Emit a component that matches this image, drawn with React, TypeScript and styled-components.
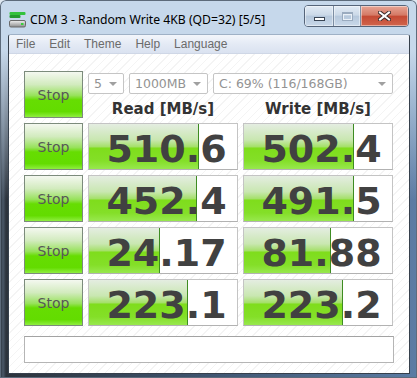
import React from 'react'
import styled, { createGlobalStyle } from 'styled-components'

const GlobalStyle = createGlobalStyle`
  html, body { margin: 0; padding: 0; }
  body {
    background: #dfe8f1;
    font-family: 'Noto Sans', 'DejaVu Sans', sans-serif;
  }
`

const Window = styled.div`
  width: 417px;
  height: 378px;
  box-sizing: border-box;
  display: flex;
  flex-direction: column;
  padding: 0 7px 4px 8px;
  border-radius: 6px 6px 0 0;
  background:
    linear-gradient(to bottom, #c6d8eb 0, #c6d8eb 50px, rgba(198, 216, 235, 0.6) 110px, rgba(198, 216, 235, 0) 200px),
    linear-gradient(to right, #262d36 0, #4a5868 3px, #2c333c 6px, #3f5570 50%, #5b7ca4 100%);
  box-shadow: inset 0 0 0 1px #5d6b7b;
`

const TitleBar = styled.div`
  height: 34px;
  display: flex;
  align-items: flex-start;
  flex-shrink: 0;
`

const AppIcon = styled.svg`
  margin: 11px 0 0 1px;
  flex-shrink: 0;
`

const Title = styled.div`
  margin: 12px 0 0 4px;
  font-size: 12.2px;
  line-height: 16px;
  color: #000;
  white-space: nowrap;
`

const CaptionGroup = styled.div`
  margin: 5px 1px 0 auto;
  display: flex;
  height: 20px;
  border: 1px solid #56657a;
  border-radius: 4px;
  overflow: hidden;
`

const CaptionButton = styled.div<{ $w: number; $close?: boolean }>`
  width: ${({ $w }) => $w}px;
  display: flex;
  align-items: center;
  justify-content: center;
  box-shadow: inset 0 0 0 1px rgba(255, 255, 255, 0.45);
  background: ${({ $close }) =>
    $close
      ? 'linear-gradient(to bottom, #e7a595 0%, #d57a66 45%, #c54a34 52%, #d1654c 100%)'
      : 'linear-gradient(to bottom, #e2ebf5 0%, #cbd9e8 45%, #b6c8dc 52%, #c9d8e9 100%)'};
  & + & {
    border-left: 1px solid #7d8ea3;
  }
`

const MinGlyph = styled.div`
  width: 9px;
  height: 2px;
  margin-top: 6px;
  background: #fff;
  border: 1px solid #3b4655;
`

const MaxGlyph = styled.div`
  width: 9px;
  height: 6px;
  border: 1px solid #9aabbf;
  border-top-width: 2px;
  box-shadow: inset 0 0 0 1px #e9f0f7;
`

const Client = styled.div`
  flex: 1;
  display: flex;
  flex-direction: column;
  border: 1px solid #36404c;
  border-top-color: #9fb1c6;
  border-radius: 3px 3px 0 0;
  background: #fff;
  overflow: hidden;
`

const MenuBar = styled.div`
  height: 19px;
  box-sizing: border-box;
  display: flex;
  align-items: center;
  background: linear-gradient(to bottom, #f3f6fb 0%, #e4eaf5 50%, #dae2f0 100%);
  border-bottom: 1px solid #cfd7e6;
`

const MenuItem = styled.span`
  padding: 0 7px;
  font-family: 'Liberation Sans', Arial, sans-serif;
  font-size: 12px;
  color: #6b6b6b;
`

const Content = styled.div`
  flex: 1;
  padding: 17px 15px 10px 15px;
  background: repeating-linear-gradient(135deg, #ffffff 0 5px, #f4f4f4 5px 6px);
`

const Grid = styled.div`
  display: grid;
  grid-template-columns: 59px 150px 150px;
  grid-auto-rows: 47px;
  gap: 5px;
`

const Controls = styled.div`
  grid-column: 2 / 4;
  display: flex;
  flex-direction: column;
`

const ComboRow = styled.div`
  display: flex;
  gap: 5px;
  margin-top: 2px;
  height: 22px;
`

const Combo = styled.div<{ $w: number }>`
  width: ${({ $w }) => $w}px;
  box-sizing: border-box;
  display: flex;
  align-items: center;
  justify-content: space-between;
  padding: 0 6px 0 5px;
  border: 1px solid #c5c5c5;
  border-radius: 2px;
  background: #fff;
  font-family: 'DejaVu Sans', sans-serif;
  font-size: 12.5px;
  color: #939393;
`

const Arrow = styled.span`
  width: 0;
  height: 0;
  border-left: 4px solid transparent;
  border-right: 4px solid transparent;
  border-top: 4px solid #a0a0a0;
`

const Headers = styled.div`
  display: grid;
  grid-template-columns: 150px 150px;
  column-gap: 5px;
  padding-top: 6px;
  line-height: 18px;
  font-family: 'DejaVu Sans', sans-serif;
  font-weight: bold;
  font-size: 15px;
  color: #333;
  text-align: center;
`

const StopButton = styled.button`
  padding: 0;
  border: 1px solid #7c8b7c;
  background: linear-gradient(to bottom, #f4f8f0 0%, #d2ebbe 28%, #98e25c 52%, #66dd02 62%, #63dc00 88%, #8fee40 100%);
  font-family: 'DejaVu Sans', sans-serif;
  font-size: 14px;
  color: #575757;
  cursor: default;
`

const ResultCell = styled.div<{ $pct: number }>`
  box-sizing: border-box;
  border: 1px solid #c4c4c4;
  border-bottom-color: #b2b2b2;
  padding: 5px 0 0 7px;
  text-align: center;
  font-family: 'DejaVu Sans', sans-serif;
  font-weight: bold;
  font-size: 38px;
  line-height: 40px;
  color: #414141;
  background-color: #fff;
  background-image:
    linear-gradient(#3e8c22, #3e8c22),
    linear-gradient(to bottom, #e4ede1 0%, #c9e7b1 35%, #a6e06c 50%, #7fdd1c 54%, #84df28 82%, #98e84e 100%);
  background-size: 1px 100%, ${({ $pct }) => $pct}% 100%;
  background-position: ${({ $pct }) => $pct}% 0, 0 0;
  background-repeat: no-repeat;
`

const Comment = styled.div`
  margin-top: 10px;
  width: 370px;
  height: 27px;
  box-sizing: border-box;
  border: 1px solid #b5b5b5;
  border-top-color: #a3a3a3;
  background: #fff;
`

const results = [
  ['510.6', '502.4'],
  ['452.4', '491.5'],
  ['24.17', '81.88'],
  ['223.1', '223.2'],
]

// CrystalDiskMark draws the bar on a log scale
const barPct = (v: string) => Math.max(0, Math.min(100, (Math.log10(parseFloat(v) * 10) / 5) * 100))

export default function App() {
  return (
    <>
      <GlobalStyle />
      <Window>
        <TitleBar>
          <AppIcon width="17" height="17" viewBox="0 0 17 17">
            <defs>
              <linearGradient id="drv" x1="0" y1="0" x2="0" y2="1">
                <stop offset="0" stopColor="#f0f0f0" />
                <stop offset="1" stopColor="#8c8c8c" />
              </linearGradient>
            </defs>
            <rect x="0.5" y="1" width="16" height="3" rx="1" fill="#33c23c" />
            <rect x="0.5" y="4" width="11" height="3" rx="1" fill="#239a2e" />
            <rect x="0.5" y="9.5" width="16" height="6.5" rx="1.5" fill="url(#drv)" stroke="#6a6a6a" />
            <rect x="12" y="12" width="2.5" height="2" fill="#36d23a" />
          </AppIcon>
          <Title>CDM 3 - Random Write 4KB (QD=32) [5/5]</Title>
          <CaptionGroup>
            <CaptionButton $w={28}>
              <MinGlyph />
            </CaptionButton>
            <CaptionButton $w={26}>
              <MaxGlyph />
            </CaptionButton>
            <CaptionButton $w={47} $close>
              <svg width="13" height="10" viewBox="0 0 13 10">
                <path d="M2 1.5 L11 8.5 M11 1.5 L2 8.5" stroke="#3b2b2b" strokeWidth="4" strokeLinecap="square" />
                <path d="M2 1.5 L11 8.5 M11 1.5 L2 8.5" stroke="#fff" strokeWidth="2" strokeLinecap="square" />
              </svg>
            </CaptionButton>
          </CaptionGroup>
        </TitleBar>
        <Client>
          <MenuBar>
            <MenuItem>File</MenuItem>
            <MenuItem>Edit</MenuItem>
            <MenuItem>Theme</MenuItem>
            <MenuItem>Help</MenuItem>
            <MenuItem>Language</MenuItem>
          </MenuBar>
          <Content>
            <Grid>
              <StopButton>Stop</StopButton>
              <Controls>
                <ComboRow>
                  <Combo $w={36}>5<Arrow /></Combo>
                  <Combo $w={79}>1000MB<Arrow /></Combo>
                  <Combo $w={180}>C: 69% (116/168GB)<Arrow /></Combo>
                </ComboRow>
                <Headers>
                  <span>Read [MB/s]</span>
                  <span>Write [MB/s]</span>
                </Headers>
              </Controls>
              {results.map(([r, w]) => (
                <React.Fragment key={r + w}>
                  <StopButton>Stop</StopButton>
                  <ResultCell $pct={barPct(r)}>{r}</ResultCell>
                  <ResultCell $pct={barPct(w)}>{w}</ResultCell>
                </React.Fragment>
              ))}
            </Grid>
            <Comment />
          </Content>
        </Client>
      </Window>
    </>
  )
}
